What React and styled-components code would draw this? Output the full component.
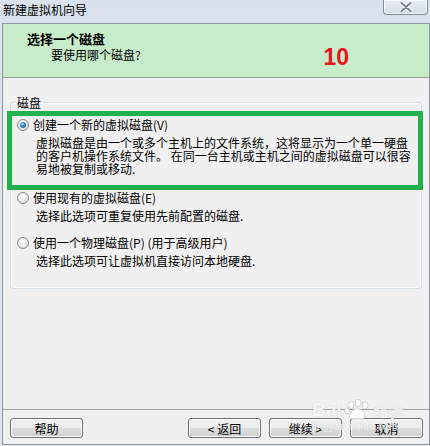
import React from "react";
import styled, { createGlobalStyle } from "styled-components";

const GlobalStyle = createGlobalStyle`
  html, body {
    margin: 0;
    padding: 0;
    background: #dae3ee;
  }
  body {
    font-family: "Noto Sans CJK SC", "Liberation Sans", sans-serif;
    font-size: 12px;
    color: #000;
  }
`

const Window = styled.div`
  position: relative;
  width: 430px;
  height: 446px;
  display: flex;
  flex-direction: column;
  background: linear-gradient(180deg, #d9e2ed 0%, #dfe6ef 100%);
  overflow: hidden;
`

const TitleBar = styled.div`
  height: 23px;
  display: flex;
  justify-content: space-between;
  align-items: flex-start;
`

const Title = styled.span`
  padding-left: 3px;
  line-height: 20px;
  font-size: 12px;
`

const CloseButton = styled.div`
  width: 45px;
  height: 15px;
  margin-right: 2px;
  box-sizing: border-box;
  border: 1px solid #808b99;
  border-top: none;
  border-radius: 0 0 4px 4px;
  background: linear-gradient(180deg, #e6ecf4 0%, #d6dee9 100%);
  box-shadow: inset 0 0 0 1px rgba(255, 255, 255, 0.7);
  display: flex;
  align-items: center;
  justify-content: center;
`

const Frame = styled.div`
  box-sizing: border-box;
  width: 428px;
  height: 422px;
  margin-left: 2px;
  border: 1px solid #8e959e;
  background: #f0f0f0;
  display: flex;
  flex-direction: column;
`

const Header = styled.div`
  height: 46px;
  background: #c7ecca;
  border-bottom: 1px solid #a0a0a0;
  padding-top: 7px;
  flex-shrink: 0;
`

const HeaderTitle = styled.div`
  margin-left: 24px;
  font-size: 13px;
  font-weight: bold;
  line-height: 16px;
`

const SubRow = styled.div`
  display: flex;
  align-items: flex-start;
  margin-left: 48px;
  margin-top: 1px;
`

const SubTitle = styled.span`
  line-height: 14px;
`

const StepNumber = styled.span`
  margin-left: auto;
  margin-right: 80px;
  margin-top: -2px;
  font-family: "Liberation Sans", Arial, sans-serif;
  font-size: 23px;
  font-weight: bold;
  line-height: 23px;
  color: #e8141c;
`

const Body = styled.div`
  flex: 1;
  padding: 18px 7px 0 7px;
`

const GroupBox = styled.fieldset`
  margin: 0;
  padding: 0 0 21px 0;
  border: 1px solid #d5dfe5;
  border-radius: 3px;
  box-shadow: inset 0 0 0 1px #fbfbfb;
  min-width: 0;
`

const Legend = styled.legend`
  margin-left: 4px;
  padding: 0 2px;
  line-height: 13px;
`

const Highlight = styled.div`
  margin: 2px -2px 0 -4px;
  border: 5px solid #22b14c;
  padding: 2px 0 10px 5px;
`

const Option = styled.div`
  padding-left: ${(p) => p.$indent}px;
  margin-top: ${(p) => p.$top}px;
`

const OptionRow = styled.div`
  display: flex;
  align-items: center;
  height: 14px;
  gap: 4px;
`

const Radio = styled.span`
  width: 12px;
  height: 12px;
  box-sizing: border-box;
  border-radius: 50%;
  border: 1px solid #8d8d8d;
  background: radial-gradient(circle at 40% 35%, #ffffff 0%, #e4e4e4 60%, #cfcfcf 100%);
  display: flex;
  align-items: center;
  justify-content: center;
  flex-shrink: 0;

  &::after {
    content: "";
    width: 6px;
    height: 6px;
    border-radius: 50%;
    background: radial-gradient(circle at 40% 35%, #bfe4ff 0%, #3d8fd6 35%, #17467a 100%);
    display: ${(p) => (p.$checked ? "block" : "none")};
  }
`

const Label = styled.span`
  line-height: 14px;
  white-space: nowrap;
`

const Description = styled.div`
  margin-top: 4px;
  padding-left: 19px;
  line-height: 13px;
  white-space: nowrap;
`

const Footer = styled.div`
  border-top: 1px solid #a0a0a0;
  padding: 8px 6px 6px 7px;
  display: flex;
  gap: 8px;
`

const Button = styled.button`
  width: 73px;
  height: 20px;
  padding: 0;
  box-sizing: border-box;
  border: 1px solid #707070;
  border-radius: 3px;
  background: linear-gradient(180deg, #f2f2f2 0%, #ebebeb 50%, #dddddd 51%, #cfcfcf 100%);
  box-shadow: inset 0 0 0 1px #fbfbfb;
  font-family: "Noto Sans CJK SC", "Liberation Sans", sans-serif;
  font-size: 12px;
  line-height: 17px;
  color: #000;
  margin-left: ${(p) => (p.$push ? "auto" : "0")};
`

const Watermark = styled.div`
  position: absolute;
  left: 312px;
  top: 399px;
  display: flex;
  flex-direction: column;
  align-items: flex-start;
  color: rgba(255, 255, 255, 0.85);
  text-shadow: 0 0 1px rgba(130, 130, 130, 0.45);
  pointer-events: none;
`

const MarkTop = styled.div`
  display: flex;
  align-items: center;
  gap: 1px;
  height: 22px;
`

const MarkBai = styled.span`
  font-family: "Liberation Sans", Arial, sans-serif;
  font-weight: bold;
  font-size: 19px;
`

const MarkJy = styled.span`
  font-size: 15px;
  margin-left: 2px;
`

const MarkUrl = styled.span`
  font-family: "Liberation Sans", Arial, sans-serif;
  font-size: 10px;
  line-height: 11px;
  letter-spacing: 0.3px;
`

function CloseIcon() {
  return (
    <svg width="12" height="10" viewBox="0 0 12 10">
      <path d="M1.5 1 L10.5 9 M10.5 1 L1.5 9" stroke="#fff" strokeWidth="3.6" strokeLinecap="round" />
      <path d="M1.5 1 L10.5 9 M10.5 1 L1.5 9" stroke="#7a8592" strokeWidth="2" strokeLinecap="round" />
    </svg>
  )
}

function Paw() {
  return (
    <svg width="28" height="22" viewBox="0 0 28 22">
      <g fill="rgba(255,255,255,0.85)" stroke="rgba(140,140,140,0.45)" strokeWidth="0.8">
        <ellipse cx="8" cy="6" rx="3" ry="3.6" />
        <ellipse cx="15" cy="3.8" rx="3" ry="3.6" />
        <ellipse cx="22" cy="6.5" rx="3" ry="3.6" />
        <ellipse cx="4" cy="12" rx="2.6" ry="3.2" />
        <path d="M7 20 C5 14 11 9 14 9 C18 9 24 14 21 20 Z" />
      </g>
    </svg>
  )
}

const options = [
  {
    label: "使用现有的虚拟磁盘(E)",
    desc: ["选择此选项可重复使用先前配置的磁盘."],
    top: 1,
  },
  {
    label: "使用一个物理磁盘(P) (用于高级用户)",
    desc: ["选择此选项可让虚拟机直接访问本地硬盘."],
    top: 14,
  },
]

export default function App() {
  return (
    <>
      <GlobalStyle />
      <Window>
        <TitleBar>
          <Title>新建虚拟机向导</Title>
          <CloseButton>
            <CloseIcon />
          </CloseButton>
        </TitleBar>
        <Frame>
          <Header>
            <HeaderTitle>选择一个磁盘</HeaderTitle>
            <SubRow>
              <SubTitle>要使用哪个磁盘?</SubTitle>
              <StepNumber>10</StepNumber>
            </SubRow>
          </Header>
          <Body>
            <GroupBox>
              <Legend>磁盘</Legend>
              <Highlight>
                <OptionRow>
                  <Radio $checked />
                  <Label>创建一个新的虚拟磁盘(V)</Label>
                </OptionRow>
                <Description>
                  虚拟磁盘是由一个或多个主机上的文件系统，这将显示为一个单一硬盘
                  <br />
                  的客户机操作系统文件。 在同一台主机或主机之间的虚拟磁盘可以很容
                  <br />
                  易地被复制或移动.
                </Description>
              </Highlight>
              {options.map((o) => (
                <Option key={o.label} $indent={6} $top={o.top}>
                  <OptionRow>
                    <Radio />
                    <Label>{o.label}</Label>
                  </OptionRow>
                  {o.desc.map((d) => (
                    <Description key={d}>{d}</Description>
                  ))}
                </Option>
              ))}
            </GroupBox>
          </Body>
          <Footer>
            <Button>帮助</Button>
            <Button $push>&lt; 返回</Button>
            <Button>继续 &gt;</Button>
            <Button>取消</Button>
          </Footer>
        </Frame>
        <Watermark>
          <MarkTop>
            <MarkBai>Bai</MarkBai>
            <Paw />
            <MarkJy>经验</MarkJy>
          </MarkTop>
          <MarkUrl>jingyan.baidu.com</MarkUrl>
        </Watermark>
      </Window>
    </>
  )
}
